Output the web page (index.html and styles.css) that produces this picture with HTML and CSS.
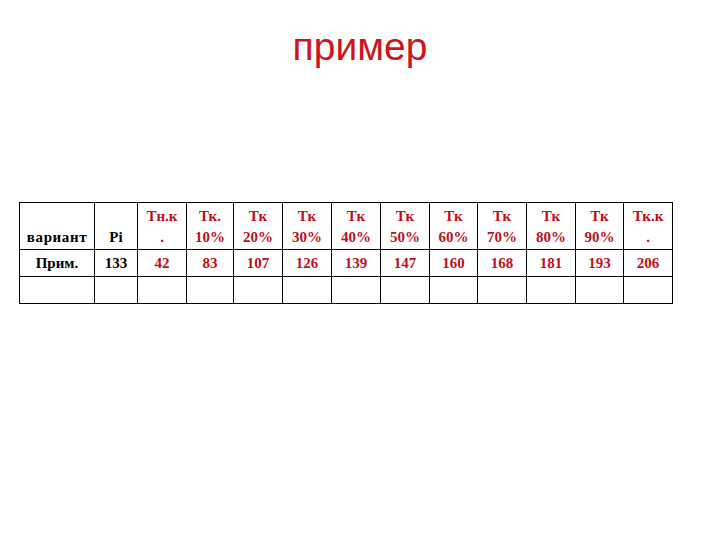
FILE: index.html
```html
<!DOCTYPE html>
<html lang="ru">
<head>
<meta charset="utf-8">
<link rel="stylesheet" href="styles.css">
</head>
<body>
<h1 class="title">пример</h1>
<table class="grid">
  <colgroup>
    <col class="c-var"><col class="c-pi"><col class="c1"><col class="c2"><col class="c3"><col class="c4"><col class="c5"><col class="c6"><col class="c7"><col class="c8"><col class="c9"><col class="c10"><col class="c11">
  </colgroup>
  <tr class="head">
    <td class="blk wide">вариант</td>
    <td class="blk">Pi</td>
    <td>Тн.к<br>.</td>
    <td>Тк.<br>10%</td>
    <td>Тк<br>20%</td>
    <td>Тк<br>30%</td>
    <td>Тк<br>40%</td>
    <td>Тк<br>50%</td>
    <td>Тк<br>60%</td>
    <td>Тк<br>70%</td>
    <td>Тк<br>80%</td>
    <td>Тк<br>90%</td>
    <td>Тк.к<br>.</td>
  </tr>
  <tr class="data">
    <td class="blk">Прим.</td>
    <td class="blk">133</td>
    <td>42</td><td>83</td><td>107</td><td>126</td><td>139</td><td>147</td><td>160</td><td>168</td><td>181</td><td>193</td><td>206</td>
  </tr>
  <tr class="empty">
    <td></td><td></td><td></td><td></td><td></td><td></td><td></td><td></td><td></td><td></td><td></td><td></td><td></td>
  </tr>
</table>
</body>
</html>
```
FILE: styles.css
```css
html, body {
  margin: 0;
  padding: 0;
  background: #ffffff;
}
body {
  width: 720px;
  height: 540px;
  overflow: hidden;
}
.title {
  margin: 0;
  padding-top: 23px;
  height: 180px;
  box-sizing: border-box;
  text-align: center;
  font-family: "Liberation Sans", Arial, sans-serif;
  font-weight: normal;
  font-size: 39px;
  line-height: 48px;
  color: #d0141c;
}
.grid {
  margin-left: 19px;
  margin-top: 22px;
  border-collapse: collapse;
  table-layout: fixed;
  width: 654px;
  font-family: "Liberation Serif", "Times New Roman", serif;
  font-weight: bold;
  font-size: 15px;
  color: #c0101a;
}
.grid td {
  border: 1px solid #000;
  text-align: center;
  padding: 0;
  line-height: 21px;
}
.c-var { width: 75px; }
.c-pi { width: 43px; }
.c1 { width: 49px; }
.c2 { width: 47px; }
.c3, .c4, .c5, .c6 { width: 49px; }
.c7 { width: 48px; }
.c8, .c9 { width: 49px; }
.c10 { width: 48px; }
.c11 { width: 49px; }
.head td {
  height: 45px;
  vertical-align: bottom;
  padding-bottom: 1px;
}
.data td {
  height: 26px;
  vertical-align: middle;
}
.empty td {
  height: 26px;
}
.blk {
  color: #000;
}
.wide {
  letter-spacing: 0.6px;
}
```
